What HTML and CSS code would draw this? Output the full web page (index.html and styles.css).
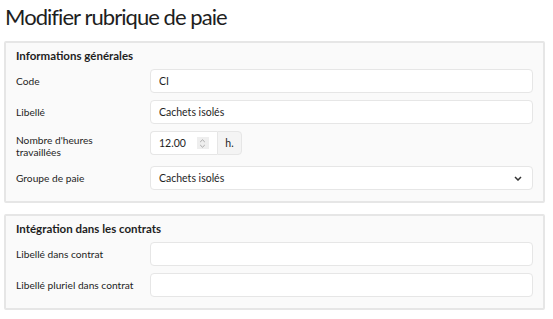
FILE: index.html
```html
<!DOCTYPE html>
<html>
<head>
    <title>Modifier rubrique de paie</title>
    <link rel="stylesheet" href="styles.css">
</head>
<body>
    <h1>Modifier rubrique de paie</h1>

    <div class="panel">
        <h3>Informations générales</h3>
        <div class="row">
            <label>Code</label>
            <input type="text" value="CI">
        </div>
        <div class="row">
            <label>Libellé</label>
            <input type="text" value="Cachets isolés">
        </div>
        <div class="row tall">
            <label>Nombre d'heures<br>travaillées</label>
            <div class="input-group">
                <div class="number">
                    <span>12.00</span>
                    <span class="spin">
                        <svg width="7" height="11" viewBox="0 0 7 11"><path d="M1.2 4 L3.5 1.8 L5.8 4 M1.2 7 L3.5 9.2 L5.8 7" fill="none" stroke="#a0a0a0" stroke-width="0.9"/></svg>
                    </span>
                </div>
                <div class="addon">h.</div>
            </div>
        </div>
        <div class="row">
            <label>Groupe de paie</label>
            <div class="select">
                <span>Cachets isolés</span>
                <svg width="8" height="5" viewBox="0 0 8 5"><path d="M1 1 L4 4 L7 1" fill="none" stroke="#333" stroke-width="1.5"/></svg>
            </div>
        </div>
    </div>

    <div class="panel">
        <h3>Intégration dans les contrats</h3>
        <div class="row">
            <label>Libellé dans contrat</label>
            <input type="text" value="">
        </div>
        <div class="row">
            <label>Libellé pluriel dans contrat</label>
            <input type="text" value="">
        </div>
    </div>
</body>
</html>
```

FILE: styles.css
```css
body {
    margin: 0;
    padding: 0 8px 0 4px;
    font-family: Lato, "Open Sans", sans-serif;
    color: #1e1e1e;
    background: white;
}
h1 {
    font-size: 22px;
    font-weight: normal;
    letter-spacing: -0.95px;
    line-height: 26px;
    margin: 0;
    padding: 4px 0 0 1px;
    height: 41px;
    box-sizing: border-box;
}
.panel {
    background: #fafafa;
    border: 2px solid #e6e6e6;
    border-radius: 2px;
    padding: 5px 10px 11px 10px;
    margin-bottom: 11px;
}
.panel h3 {
    font-size: 11.5px;
    font-weight: bold;
    margin: 0 0 5px 0;
    height: 16px;
    line-height: 16px;
}
.row {
    display: flex;
    align-items: center;
    font-size: 10.5px;
}
.row + .row {
    margin-top: 7px;
}
.row label {
    width: 134px;
    flex-shrink: 0;
    font-size: 10.2px;
    line-height: 12px;
}
.row.tall {
    align-items: flex-start;
    height: 28px;
}
.row.tall label {
    padding-top: 3px;
}
.row input,
.select {
    flex: 1;
    height: 24px;
    box-sizing: border-box;
    border: 1px solid #e6e6e6;
    border-radius: 4px;
    background: white;
    padding: 0 8px;
    font-family: inherit;
    font-size: 10.5px;
    color: #1e1e1e;
    outline: none;
}
.select {
    display: flex;
    align-items: center;
    justify-content: space-between;
    padding-right: 10px;
}
.input-group {
    display: flex;
    height: 24px;
}
.number {
    display: flex;
    align-items: center;
    width: 67px;
    box-sizing: border-box;
    border: 1px solid #e6e6e6;
    border-right: none;
    border-radius: 4px 0 0 4px;
    background: white;
    padding: 0 0 0 8px;
    gap: 11px;
}
.spin {
    width: 12px;
    height: 12px;
    background: #eeeeee;
    display: flex;
    align-items: center;
    justify-content: center;
}
.addon {
    width: 25px;
    box-sizing: border-box;
    border: 1px solid #e6e6e6;
    border-radius: 0 4px 4px 0;
    background: #f4f4f4;
    display: flex;
    align-items: center;
    justify-content: center;
}
```
